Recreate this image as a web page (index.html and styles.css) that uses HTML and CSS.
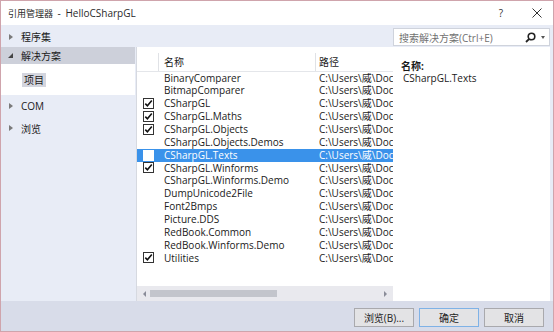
FILE: index.html
```html
<!DOCTYPE html>
<html lang="zh-CN">
<head>
<meta charset="utf-8">
<title>引用管理器</title>
<link rel="stylesheet" href="styles.css">
</head>
<body>
<div class="window">
  <div class="titlebar">
    <span class="title"><span class="title-zh">引用管理器</span> - HelloCSharpGL</span>
    <span class="help">?</span>
    <span class="close"><svg width="10" height="10" viewBox="0 0 10 10"><path d="M0.5 0.5L9.5 9.5M9.5 0.5L0.5 9.5" stroke="#333" stroke-width="1" fill="none"/></svg></span>
  </div>
  <div class="body">
    <div class="sidebar">
      <div class="nav nav-top"><span class="tri tri-right"></span>程序集</div>
      <div class="nav nav-sel"><span class="tri tri-down"></span>解决方案</div>
      <div class="subnav"><span class="chip">项目</span></div>
      <div class="nav nav-com"><span class="tri tri-right"></span>COM</div>
      <div class="nav nav-browse"><span class="tri tri-right"></span>浏览</div>
    </div>
    <div class="content">
      <div class="search">
        <span class="placeholder">搜索解决方案(Ctrl+E)</span>
        <span class="search-icon"><svg width="11" height="11" viewBox="0 0 11 11"><circle cx="6.5" cy="4.5" r="3.3" stroke="#222" stroke-width="1.6" fill="none"/><path d="M4.2 6.8L1 10" stroke="#222" stroke-width="1.8"/></svg></span>
        <span class="drop"></span>
      </div>
      <div class="list">
        <div class="list-inner">
          <div class="head">
            <div class="c-check"></div>
            <div class="c-name">名称</div>
            <div class="c-path">路径</div>
          </div>
          <div class="rows">
            <div class="row"><div class="c-check"></div><div class="c-name">BinaryComparer</div><div class="c-path">C:\Users\威\Doc</div></div>
            <div class="row"><div class="c-check"></div><div class="c-name">BitmapComparer</div><div class="c-path">C:\Users\威\Doc</div></div>
            <div class="row"><div class="c-check"><span class="box checked"></span></div><div class="c-name">CSharpGL</div><div class="c-path">C:\Users\威\Doc</div></div>
            <div class="row"><div class="c-check"><span class="box checked"></span></div><div class="c-name">CSharpGL.Maths</div><div class="c-path">C:\Users\威\Doc</div></div>
            <div class="row"><div class="c-check"><span class="box checked"></span></div><div class="c-name">CSharpGL.Objects</div><div class="c-path">C:\Users\威\Doc</div></div>
            <div class="row"><div class="c-check"></div><div class="c-name">CSharpGL.Objects.Demos</div><div class="c-path">C:\Users\威\Doc</div></div>
            <div class="row selected"><div class="c-check"><span class="box blank"></span></div><div class="c-name">CSharpGL.Texts</div><div class="c-path">C:\Users\威\Doc</div></div>
            <div class="row"><div class="c-check"><span class="box checked"></span></div><div class="c-name">CSharpGL.Winforms</div><div class="c-path">C:\Users\威\Doc</div></div>
            <div class="row"><div class="c-check"></div><div class="c-name">CSharpGL.Winforms.Demo</div><div class="c-path">C:\Users\威\Doc</div></div>
            <div class="row"><div class="c-check"></div><div class="c-name">DumpUnicode2File</div><div class="c-path">C:\Users\威\Doc</div></div>
            <div class="row"><div class="c-check"></div><div class="c-name">Font2Bmps</div><div class="c-path">C:\Users\威\Doc</div></div>
            <div class="row"><div class="c-check"></div><div class="c-name">Picture.DDS</div><div class="c-path">C:\Users\威\Doc</div></div>
            <div class="row"><div class="c-check"></div><div class="c-name">RedBook.Common</div><div class="c-path">C:\Users\威\Doc</div></div>
            <div class="row"><div class="c-check"></div><div class="c-name">RedBook.Winforms.Demo</div><div class="c-path">C:\Users\威\Doc</div></div>
            <div class="row"><div class="c-check"><span class="box checked"></span></div><div class="c-name">Utilities</div><div class="c-path">C:\Users\威\Doc</div></div>
          </div>
        </div>
        <div class="hscroll">
          <span class="arrow arrow-left"></span>
          <div class="track"><div class="thumb"></div></div>
          <span class="arrow arrow-right"></span>
        </div>
      </div>
      <div class="detail">
        <div class="d-label">名称:</div>
        <div class="d-value">CSharpGL.Texts</div>
      </div>
    </div>
  </div>
  <div class="footer">
    <button class="btn">浏览(B)...</button>
    <button class="btn btn-default">确定</button>
    <button class="btn">取消</button>
  </div>
</div>
</body>
</html>
```

FILE: styles.css
```css
* { box-sizing: border-box; }
html, body { margin: 0; padding: 0; }
body {
  width: 554px;
  height: 332px;
  overflow: hidden;
  font-family: "Open Sans", "Noto Sans CJK SC", sans-serif;
  font-size: 10px;
  color: #1a1a1a;
  background: #fff;
}
.window {
  width: 554px;
  height: 332px;
  border: 1px solid #cfa4ac;
  display: flex;
  flex-direction: column;
  background: #e8ecf6;
}
.titlebar {
  height: 24px;
  flex: none;
  background: #fff;
  display: flex;
  align-items: center;
  padding-left: 7px;
}
.title { font-size: 10px; color: #2a2a2a; flex: 1; word-spacing: 2px; }
.title-zh { font-size: 9px; }
.help { font-size: 10px; color: #333; width: 14px; margin-right: 24px; text-align: center; }
.close { width: 10px; height: 10px; margin-right: 11px; display: flex; }
.body {
  flex: 1;
  display: flex;
  min-height: 0;
}
.sidebar {
  width: 134px;
  flex: none;
  padding-top: 1px;
}
.nav {
  height: 20px;
  display: flex;
  align-items: center;
  padding-left: 7px;
}
.nav-top { height: 21px; }
.nav-sel { background: #cdd0da; height: 17px; }
.subnav {
  height: 31px;
  background: #fff;
  display: flex;
  align-items: center;
  padding-left: 21px;
}
.chip { background: #d3d5de; padding: 0 2px; line-height: 14px; }
.nav-com { margin-top: 1px; }
.nav-browse { margin-top: 2px; }
.tri { width: 0; height: 0; flex: none; }
.tri-right {
  border-left: 4px solid #7a7a7a;
  border-top: 3.5px solid transparent;
  border-bottom: 3.5px solid transparent;
  margin-left: 1px;
  margin-right: 8px;
}
.tri-down {
  border-right: 5px solid #444;
  border-top: 5px solid transparent;
  margin-right: 8px;
}
.content {
  flex: 1;
  display: grid;
  grid-template-columns: 257px 157px;
  grid-template-rows: 22px 1fr;
  padding-left: 1px;
}
.search {
  grid-column: 2;
  grid-row: 1;
  margin-top: 3px;
  margin-bottom: 1px;
  background: #fff;
  border: 1px solid #cfd3dc;
  display: flex;
  align-items: center;
  padding-left: 5px;
}
.placeholder { flex: 1; color: #717171; }
.search-icon { display: flex; margin-right: 5px; }
.drop {
  width: 0; height: 0;
  border-top: 3px solid #555;
  border-left: 2.5px solid transparent;
  border-right: 2.5px solid transparent;
  margin-right: 4px;
}
.list {
  grid-column: 1;
  grid-row: 2;
  display: flex;
  flex-direction: column;
  border-left: 1px solid #d6d9e0;
  background: #fff;
  min-height: 0;
}
.list-inner { flex: 1; padding-top: 6px; overflow: hidden; }
.head, .row { display: flex; }
.head { height: 18.5px; border-bottom: 1px solid #e4e6ea; }
.head .c-check { border-right: 1px solid #e0e2e6; }
.head .c-name { border-right: 1px solid #e0e2e6; }
.head > div { display: flex; align-items: center; }
.c-check { width: 22px; flex: none; display: flex; align-items: center; padding-left: 6px; }
.c-name { width: 157px; flex: none; padding-left: 5px; white-space: nowrap; overflow: hidden; }
.c-path { flex: 1; padding-left: 3px; white-space: nowrap; overflow: hidden; }
.row { height: 12.86px; line-height: 12.86px; }
.row.selected { background: #3a92ea; color: #fff; }
.box {
  width: 11px;
  height: 11px;
  display: block;
  border: 1px solid #333;
  background: #fff;
}
.box.checked {
  background: #fff url("data:image/svg+xml;utf8,<svg xmlns='http://www.w3.org/2000/svg' width='9' height='9' viewBox='0 0 9 9'><path d='M1.3 4.6L3.4 6.8L7.8 1.6' stroke='%23111' stroke-width='1.6' fill='none'/></svg>") center/9px 9px no-repeat;
}
.box.blank { border-color: #fff; }
.hscroll {
  height: 15px;
  flex: none;
  background: #e9e9ee;
  display: flex;
  align-items: center;
  padding: 0 4px;
}
.arrow { width: 0; height: 0; flex: none; }
.arrow-left { border-right: 3px solid #8a8c98; border-top: 3.5px solid transparent; border-bottom: 3.5px solid transparent; margin-left: 2px; }
.arrow-right { border-left: 3px solid #8a8c98; border-top: 3.5px solid transparent; border-bottom: 3.5px solid transparent; margin-right: 2px; }
.track { flex: 1; padding: 0 4px; }
.thumb { width: 127px; height: 7px; background: #c3c5cc; }
.detail {
  grid-column: 2;
  grid-row: 2;
  background: #fff;
  padding: 13px 8px 0 8px;
  line-height: 13px;
}
.d-label { font-weight: bold; }
.d-value { padding-left: 2px; margin-top: -1px; }
.footer {
  height: 30px;
  flex: none;
  background: #d8dce9;
  display: flex;
  justify-content: flex-end;
  align-items: center;
  gap: 5px;
  padding-right: 9px;
  padding-top: 2px;
}
.btn {
  width: 60px;
  height: 19px;
  font-family: inherit;
  font-size: 10px;
  color: #1e1e1e;
  background: #e3e3e5;
  border: 1px solid #a9a9ad;
  padding: 0;
  margin: 0;
}
.btn-default { border-color: #7fb2e6; }
```
